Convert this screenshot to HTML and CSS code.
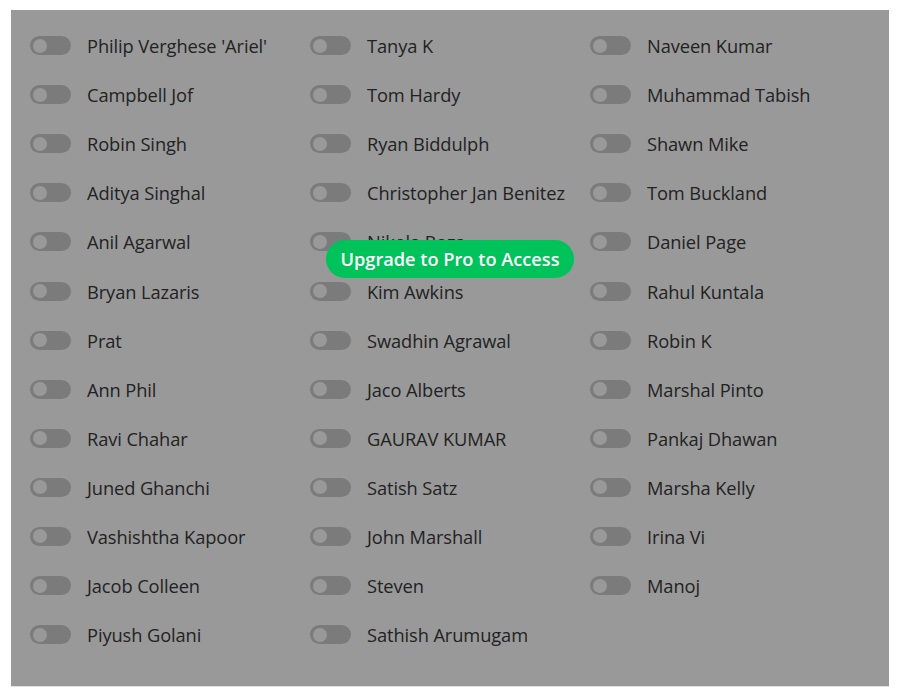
FILE: index.html
```html
<!DOCTYPE html>
<html>
<head>
<meta charset="utf-8">
<link rel="stylesheet" href="styles.css">
</head>
<body>
<div class="panel">
  <div class="list">
    <div class="item"><span class="toggle"></span><span class="name">Philip Verghese 'Ariel'</span></div>
    <div class="item"><span class="toggle"></span><span class="name">Tanya K</span></div>
    <div class="item"><span class="toggle"></span><span class="name">Naveen Kumar</span></div>
    <div class="item"><span class="toggle"></span><span class="name">Campbell Jof</span></div>
    <div class="item"><span class="toggle"></span><span class="name">Tom Hardy</span></div>
    <div class="item"><span class="toggle"></span><span class="name">Muhammad Tabish</span></div>
    <div class="item"><span class="toggle"></span><span class="name">Robin Singh</span></div>
    <div class="item"><span class="toggle"></span><span class="name">Ryan Biddulph</span></div>
    <div class="item"><span class="toggle"></span><span class="name">Shawn Mike</span></div>
    <div class="item"><span class="toggle"></span><span class="name">Aditya Singhal</span></div>
    <div class="item"><span class="toggle"></span><span class="name">Christopher Jan Benitez</span></div>
    <div class="item"><span class="toggle"></span><span class="name">Tom Buckland</span></div>
    <div class="item"><span class="toggle"></span><span class="name">Anil Agarwal</span></div>
    <div class="item"><span class="toggle"></span><span class="name">Nikola Roza</span></div>
    <div class="item"><span class="toggle"></span><span class="name">Daniel Page</span></div>
    <div class="item"><span class="toggle"></span><span class="name">Bryan Lazaris</span></div>
    <div class="item"><span class="toggle"></span><span class="name">Kim Awkins</span></div>
    <div class="item"><span class="toggle"></span><span class="name">Rahul Kuntala</span></div>
    <div class="item"><span class="toggle"></span><span class="name">Prat</span></div>
    <div class="item"><span class="toggle"></span><span class="name">Swadhin Agrawal</span></div>
    <div class="item"><span class="toggle"></span><span class="name">Robin K</span></div>
    <div class="item"><span class="toggle"></span><span class="name">Ann Phil</span></div>
    <div class="item"><span class="toggle"></span><span class="name">Jaco Alberts</span></div>
    <div class="item"><span class="toggle"></span><span class="name">Marshal Pinto</span></div>
    <div class="item"><span class="toggle"></span><span class="name">Ravi Chahar</span></div>
    <div class="item"><span class="toggle"></span><span class="name">GAURAV KUMAR</span></div>
    <div class="item"><span class="toggle"></span><span class="name">Pankaj Dhawan</span></div>
    <div class="item"><span class="toggle"></span><span class="name">Juned Ghanchi</span></div>
    <div class="item"><span class="toggle"></span><span class="name">Satish Satz</span></div>
    <div class="item"><span class="toggle"></span><span class="name">Marsha Kelly</span></div>
    <div class="item"><span class="toggle"></span><span class="name">Vashishtha Kapoor</span></div>
    <div class="item"><span class="toggle"></span><span class="name">John Marshall</span></div>
    <div class="item"><span class="toggle"></span><span class="name">Irina Vi</span></div>
    <div class="item"><span class="toggle"></span><span class="name">Jacob Colleen</span></div>
    <div class="item"><span class="toggle"></span><span class="name">Steven</span></div>
    <div class="item"><span class="toggle"></span><span class="name">Manoj</span></div>
    <div class="item"><span class="toggle"></span><span class="name">Piyush Golani</span></div>
    <div class="item"><span class="toggle"></span><span class="name">Sathish Arumugam</span></div>
  </div>
  <div class="overlay">
    <button class="upgrade">Upgrade to Pro to Access</button>
  </div>
</div>
</body>
</html>
```
FILE: styles.css
```css
html, body {
  margin: 0;
  padding: 0;
  background: #fff;
}
body {
  padding: 10px 11px 0 11px;
  font-family: "Open Sans", "Noto Sans", sans-serif;
}
.panel {
  position: relative;
  width: 878px;
  height: 677px;
  background: #fff;
  border-bottom: 1px solid #e0e0e0;
  box-sizing: border-box;
}
.list {
  display: grid;
  grid-template-columns: repeat(3, 280px);
  grid-auto-rows: 49.1px;
  padding: 11px 0 0 19px;
}
.item {
  display: flex;
  align-items: center;
  gap: 16px;
}
.toggle {
  position: relative;
  flex: none;
  width: 41px;
  height: 19px;
  border-radius: 10px;
  background: #cdcdcd;
}
.toggle::after {
  content: "";
  position: absolute;
  left: 3px;
  top: 2.5px;
  width: 14px;
  height: 14px;
  border-radius: 50%;
  background: #fff;
}
.name {
  font-size: 18.3px;
  color: #3a3a3a;
  white-space: nowrap;
  letter-spacing: -0.1px;
}
.overlay {
  position: absolute;
  inset: 0;
  background: rgba(0, 0, 0, 0.4);
}
.upgrade {
  position: absolute;
  left: 315px;
  top: 230px;
  width: 248px;
  height: 38px;
  border: none;
  border-radius: 19px;
  background: #00c25a;
  color: #fff;
  font-family: "Open Sans", "Noto Sans", sans-serif;
  font-weight: 600;
  font-size: 18.2px;
  padding: 0;
}
```
